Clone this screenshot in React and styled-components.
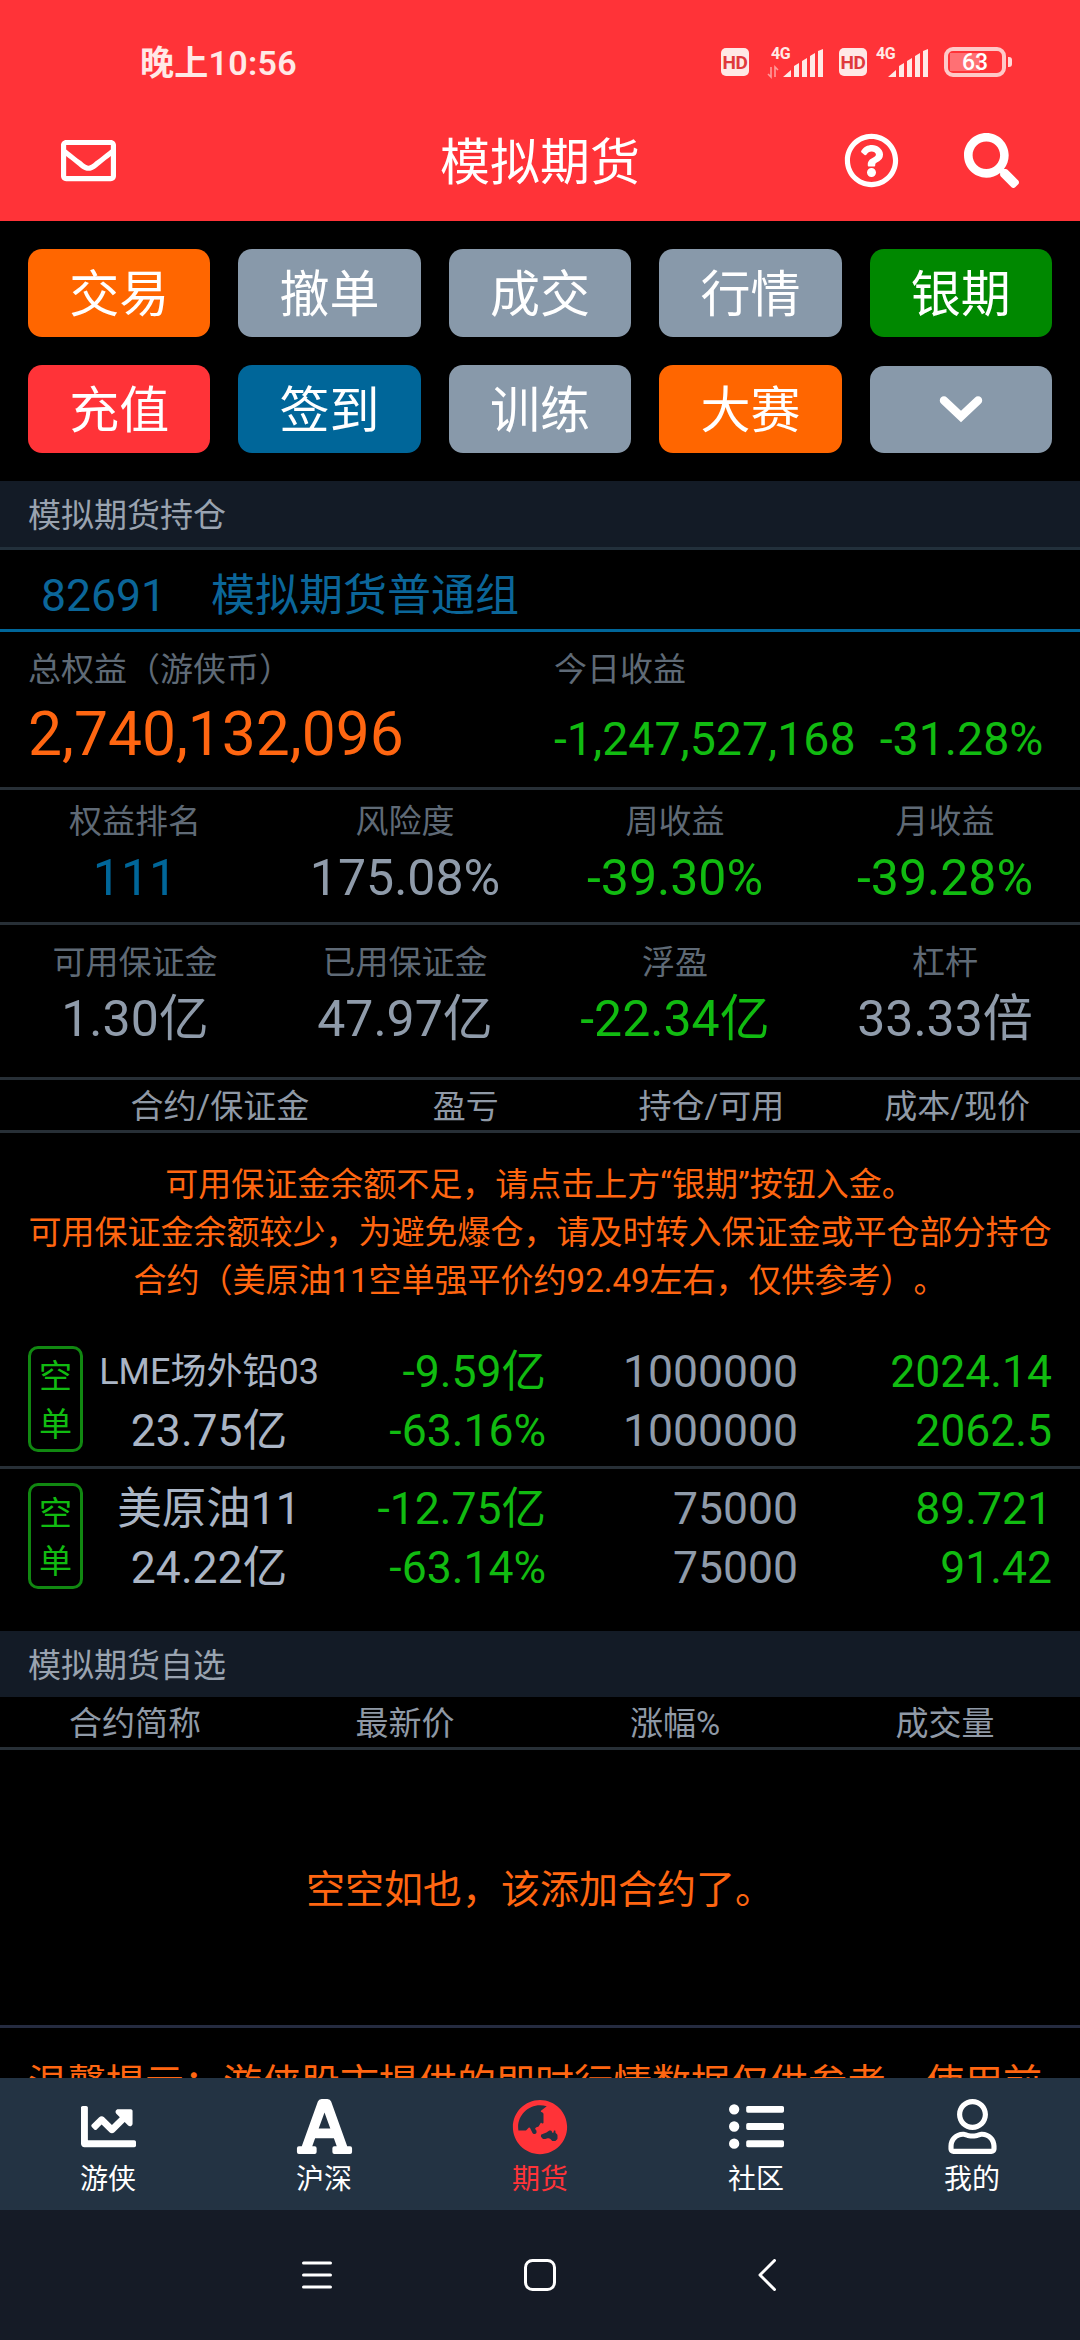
import React from "react";
import styled, { createGlobalStyle } from "styled-components";
import {
  FaRegEnvelope,
  FaRegQuestionCircle,
  FaSearch,
  FaChartLine,
  FaFont,
  FaGlobeAsia,
  FaListUl,
  FaRegUser,
} from "react-icons/fa";

const actions = [
  { text: "交易", color: "#ff6600" },
  { text: "撤单", color: "#8899aa" },
  { text: "成交", color: "#8899aa" },
  { text: "行情", color: "#8899aa" },
  { text: "银期", color: "#008800" },
  { text: "充值", color: "#ff3338" },
  { text: "签到", color: "#006699" },
  { text: "训练", color: "#8899aa" },
  { text: "大赛", color: "#ff6600" },
];

const rankStats = [
  { label: "权益排名", value: "111", color: "#006699" },
  { label: "风险度", value: "175.08%" },
  { label: "周收益", value: "-39.30%", color: "#11bb11" },
  { label: "月收益", value: "-39.28%", color: "#11bb11" },
];

const marginStats = [
  { label: "可用保证金", value: "1.30亿" },
  { label: "已用保证金", value: "47.97亿" },
  { label: "浮盈", value: "-22.34亿", color: "#11bb11" },
  { label: "杠杆", value: "33.33倍" },
];

const positions = [
  {
    name: "LME场外铅03",
    small: true,
    margin: "23.75亿",
    profit: "-9.59亿",
    rate: "-63.16%",
    hold: "1000000",
    usable: "1000000",
    cost: "2024.14",
    price: "2062.5",
  },
  {
    name: "美原油11",
    margin: "24.22亿",
    profit: "-12.75亿",
    rate: "-63.14%",
    hold: "75000",
    usable: "75000",
    cost: "89.721",
    price: "91.42",
  },
];

const tabs = [
  { text: "游侠", Icon: FaChartLine, size: 55 },
  { text: "沪深", Icon: FaFont, size: 63 },
  { text: "期货", Icon: FaGlobeAsia, size: 56, active: true },
  { text: "社区", Icon: FaListUl, size: 55 },
  { text: "我的", Icon: FaRegUser, size: 55 },
];

const Signal = ({ data }) => (
  <SignalIcon $data={data} width="58" height="34" viewBox="0 0 58 34">
    <text x="5" y="14">4G</text>
    {data && (
      <path
        d="M5 22v10l-3-3M9 32V22l3 3"
        fill="none"
        stroke="#ff9a9a"
        strokeWidth="1.6"
      />
    )}
    <path d="M17 32l8-7v7zM28 32V21l5-3v14zM36 32V16l5-3v19zM44 32V11l5-3v24zM52 32V6l5-2v28z" />
  </SignalIcon>
);

const App = () => {
  return (
    <Page>
      <GlobalStyle />
      <Header>
        <StatusBar>
          <Time>晚上10:56</Time>
          <StatusIcons>
            <HdBadge>HD</HdBadge>
            <Signal data />
            <HdBadge>HD</HdBadge>
            <Signal />
            <Battery>
              <span>63</span>
            </Battery>
          </StatusIcons>
        </StatusBar>
        <NavBar>
          <FaRegEnvelope size={55} />
          <Title>模拟期货</Title>
          <NavRight>
            <FaRegQuestionCircle size={55} />
            <FaSearch size={55} />
          </NavRight>
        </NavBar>
      </Header>

      <Content>
        <Actions>
          {actions.map((a) => (
            <ActionButton key={a.text} $color={a.color}>
              {a.text}
            </ActionButton>
          ))}
          <MoreButton $color="#8899aa">
            <svg width="44" height="28" viewBox="0 0 44 28">
              <path
                d="M5 5.5l17 16 17-16"
                fill="none"
                stroke="#fff"
                strokeWidth="8.4"
                strokeLinecap="round"
              />
            </svg>
          </MoreButton>
        </Actions>

        <SectionTitle $line>模拟期货持仓</SectionTitle>
        <Group>
          <span>82691</span>
          <GroupName>模拟期货普通组</GroupName>
        </Group>

        <Summary>
          <div>
            <Label>总权益（游侠币）</Label>
            <Total>2,740,132,096</Total>
          </div>
          <div>
            <Label>今日收益</Label>
            <Today>
              <span>-1,247,527,168</span>
              <span>-31.28%</span>
            </Today>
          </div>
        </Summary>

        <Stats $top={8} $bottom={12}>
          {rankStats.map((s) => (
            <div key={s.label}>
              <Label>{s.label}</Label>
              <Value $color={s.color}>{s.value}</Value>
            </div>
          ))}
        </Stats>
        <Stats $top={14} $bottom={26}>
          {marginStats.map((s) => (
            <div key={s.label}>
              <Label>{s.label}</Label>
              <Value $color={s.color}>{s.value}</Value>
            </div>
          ))}
        </Stats>

        <TableHead $columns="97px repeat(4, 1fr)">
          <span />
          <span>合约/保证金</span>
          <span>盈亏</span>
          <span>持仓/可用</span>
          <span>成本/现价</span>
        </TableHead>

        <Warning>
          <p>可用保证金余额不足，请点击上方“银期”按钮入金。</p>
          <p>
            可用保证金余额较少，为避免爆仓，请及时转入保证金或平仓部分持仓合约（美原油11空单强平价约92.49左右，仅供参考）。
          </p>
        </Warning>

        <Positions>
          {positions.map((p) => (
            <Position key={p.name}>
              <Side>空单</Side>
              <Name>
                <NameText $small={p.small}>{p.name}</NameText>
                <div>{p.margin}</div>
              </Name>
              <Cell $green>
                <div>{p.profit}</div>
                <div>{p.rate}</div>
              </Cell>
              <Cell>
                <div>{p.hold}</div>
                <div>{p.usable}</div>
              </Cell>
              <Cell $green>
                <div>{p.cost}</div>
                <div>{p.price}</div>
              </Cell>
            </Position>
          ))}
        </Positions>

        <SectionTitle>模拟期货自选</SectionTitle>
        <TableHead $columns="repeat(4, 1fr)">
          <span>合约简称</span>
          <span>最新价</span>
          <span>涨幅%</span>
          <span>成交量</span>
        </TableHead>
        <Empty>空空如也，该添加合约了。</Empty>
        <Tips>温馨提示：游侠股市提供的即时行情数据仅供参考，使用前</Tips>
      </Content>

      <TabBar>
        {tabs.map(({ text, Icon, size, active }) => (
          <Tab key={text} $active={active}>
            <TabIcon>
              <Icon size={size} />
            </TabIcon>
            <TabText>{text}</TabText>
          </Tab>
        ))}
      </TabBar>
      <SystemBar>
        <svg width="32" height="32" viewBox="0 0 32 32">
          <path d="M2.5 4h27M2.5 16h27M2.5 28h27" />
        </svg>
        <svg width="32" height="32" viewBox="0 0 32 32">
          <rect x="1.5" y="1.5" width="29" height="29" rx="7" />
        </svg>
        <svg width="32" height="32" viewBox="0 0 32 32">
          <path d="M23.5 1.5L9 16l14.500 14.500" />
        </svg>
      </SystemBar>
    </Page>
  );
};

const GlobalStyle = createGlobalStyle`
  * {
    box-sizing: border-box;
    margin: 0;
    padding: 0;
  }
  body {
    background: #000;
    font-family: Roboto, "Noto Sans CJK SC", sans-serif;
    text-spacing-trim: space-all;
  }
`;

const Page = styled.div`
  display: flex;
  flex-direction: column;
  width: 1080px;
  height: 2340px;
  overflow: hidden;
  background: #000;
`;

const Header = styled.header`
  flex: none;
  height: 221px;
  background: #ff3338;
  color: #fff;
`;
const StatusBar = styled.div`
  display: flex;
  justify-content: space-between;
  height: 100px;
  padding: 0 74px 0 140px;
  color: #ffe9e6;
`;
const Time = styled.div`
  font-size: 34px;
  font-weight: 600;
  letter-spacing: 0.3px;
  line-height: 127px;
`;
const StatusIcons = styled.div`
  display: flex;
  align-items: center;
  height: 124px;
`;
const HdBadge = styled.span`
  width: 28px;
  height: 28px;
  border-radius: 5px;
  background: #ffe9e6;
  color: #e0393c;
  font-size: 19px;
  font-weight: 700;
  line-height: 30px;
  text-align: center;
  letter-spacing: -0.5px;
`;
const SignalIcon = styled.svg`
  margin: ${(props) => (props.$data ? "0 15px 0 17px" : "0 15px 0 4px")};
  fill: #ffe9e6;
  text {
    font-size: 16px;
    font-weight: 700;
    letter-spacing: -0.5px;
  }
`;
const Battery = styled.div`
  position: relative;
  width: 62px;
  height: 30px;
  border: 4px solid #ffc9c8;
  border-radius: 9px;
  background: linear-gradient(90deg, #ff7074 60%, transparent 60%) no-repeat 2px
    2px / 50px 18px;
  color: #fff;
  font-size: 23px;
  font-weight: 500;
  line-height: 24px;
  text-align: center;
  &::after {
    content: "";
    position: absolute;
    right: -10px;
    top: 6px;
    width: 4px;
    height: 10px;
    border-radius: 0 3px 3px 0;
    background: #ffd9d8;
  }
`;

const NavBar = styled.div`
  display: grid;
  grid-template-columns: 1fr auto 1fr;
  align-items: center;
  height: 121px;
  padding: 0 61px;
`;
const Title = styled.h1`
  padding-top: 4px;
  font-size: 50px;
  font-weight: 400;
  line-height: 60px;
`;
const NavRight = styled.div`
  display: flex;
  justify-content: flex-end;
  gap: 65px;
`;

const Content = styled.main`
  flex: none;
  height: 1857px;
  overflow: hidden;
`;

const Actions = styled.div`
  display: grid;
  grid-template-columns: repeat(5, 1fr);
  gap: 28px;
  padding: 28px;
`;
const ActionButton = styled.button`
  height: 88px;
  padding-top: 4px;
  border: none;
  border-radius: 14px;
  background: ${(props) => props.$color};
  color: #fff;
  font-family: inherit;
  font-size: 50px;
  line-height: 84px;
`;
const MoreButton = styled(ActionButton)`
  display: flex;
  align-items: center;
  justify-content: center;
  height: 87px;
  margin-top: 1px;
  padding: 0 0 1px;
`;

const SectionTitle = styled.h2`
  padding: 4px 28px 0;
  border-bottom: ${(props) => (props.$line ? "3px solid #22303b" : "none")};
  background: #131b26;
  color: #99a3b0;
  font-size: 33px;
  font-weight: 400;
  line-height: 62px;
`;
const Group = styled.div`
  display: flex;
  align-items: baseline;
  gap: 45px;
  height: 82px;
  padding: 13px 41px 0;
  border-bottom: 3px solid #006699;
  color: #0b6699;
  font-size: 44.5px;
  line-height: 66px;
`;
const GroupName = styled.span`
  font-size: 44px;
`;

const Summary = styled.div`
  display: grid;
  grid-template-columns: 526px 1fr;
  height: 158px;
  padding: 14px 0 0 28px;
  border-bottom: 3px solid #272f36;
`;
const Label = styled.div`
  color: #5f6a76;
  font-size: 33px;
  line-height: 48px;
`;
const Total = styled.div`
  color: #ff6611;
  font-size: 60.5px;
  line-height: 81px;
`;
const Today = styled.div`
  display: flex;
  gap: 24px;
  color: #11bb11;
  font-size: 46.5px;
  line-height: 91px;
`;

const Stats = styled.div`
  display: grid;
  grid-template-columns: repeat(4, 1fr);
  padding: ${(props) => props.$top}px 0 ${(props) => props.$bottom}px;
  border-bottom: 3px solid #272f36;
  text-align: center;
`;
const Value = styled.div`
  color: ${(props) => props.$color || "#8f9baa"};
  font-size: 50px;
  line-height: 64px;
`;

const TableHead = styled.div`
  display: grid;
  grid-template-columns: ${(props) => props.$columns};
  height: 53px;
  border-bottom: 3px solid #272f36;
  color: #8f99a6;
  font-size: 33px;
  line-height: 54px;
  text-align: center;
`;

const Warning = styled.div`
  padding: 28px 28px 27px;
  color: #ff6611;
  font-size: 33px;
  line-height: 48px;
  text-align: center;
`;

const Positions = styled.div`
  padding-bottom: 25px;
`;
const Position = styled.div`
  display: grid;
  grid-template-columns: 55px 252px 211px 252px 1fr;
  height: 137px;
  padding: 11px 28px 0;
  font-size: 44.5px;
  line-height: 59px;
  &:not(:last-child) {
    border-bottom: 3px solid #272f36;
  }
`;
const Side = styled.div`
  height: 106px;
  margin-top: 3px;
  padding: 4px 8px 0;
  border: 3px solid #118811;
  border-radius: 10px;
  color: #11bb11;
  font-size: 33px;
  line-height: 48px;
`;
const Name = styled.div`
  color: #aab5c5;
  text-align: center;
`;
const NameText = styled.div`
  font-size: ${(props) => (props.$small ? "36px" : "44.5px")};
`;
const Cell = styled.div`
  color: ${(props) => (props.$green ? "#11bb11" : "#8f9baa")};
  text-align: right;
`;

const Empty = styled.div`
  height: 278px;
  border-bottom: 3px solid #252b40;
  color: #ff6611;
  font-size: 39px;
  line-height: 280px;
  text-align: center;
`;
const Tips = styled.p`
  padding: 28px 28px 0;
  color: #ff6611;
  font-size: 39px;
  line-height: 56px;
  white-space: nowrap;
`;

const TabBar = styled.nav`
  display: grid;
  grid-template-columns: repeat(5, 1fr);
  flex: none;
  height: 132px;
  background: #233343;
`;
const Tab = styled.div`
  display: flex;
  flex-direction: column;
  align-items: center;
  padding-top: 21px;
  color: ${(props) => (props.$active ? "#ff3338" : "#fff")};
`;
const TabIcon = styled.div`
  display: flex;
  align-items: center;
  justify-content: center;
  height: 55px;
`;
const TabText = styled.span`
  font-size: 28px;
  line-height: 52px;
`;
const SystemBar = styled.div`
  display: flex;
  flex: 1;
  align-items: center;
  gap: 191px;
  padding-left: 301px;
  background: #151b26;
  svg {
    fill: none;
    stroke: #fff;
    stroke-width: 3;
    stroke-linecap: round;
    stroke-linejoin: round;
  }
  svg:last-child {
    margin-left: 4px;
  }
`;

export default App;
